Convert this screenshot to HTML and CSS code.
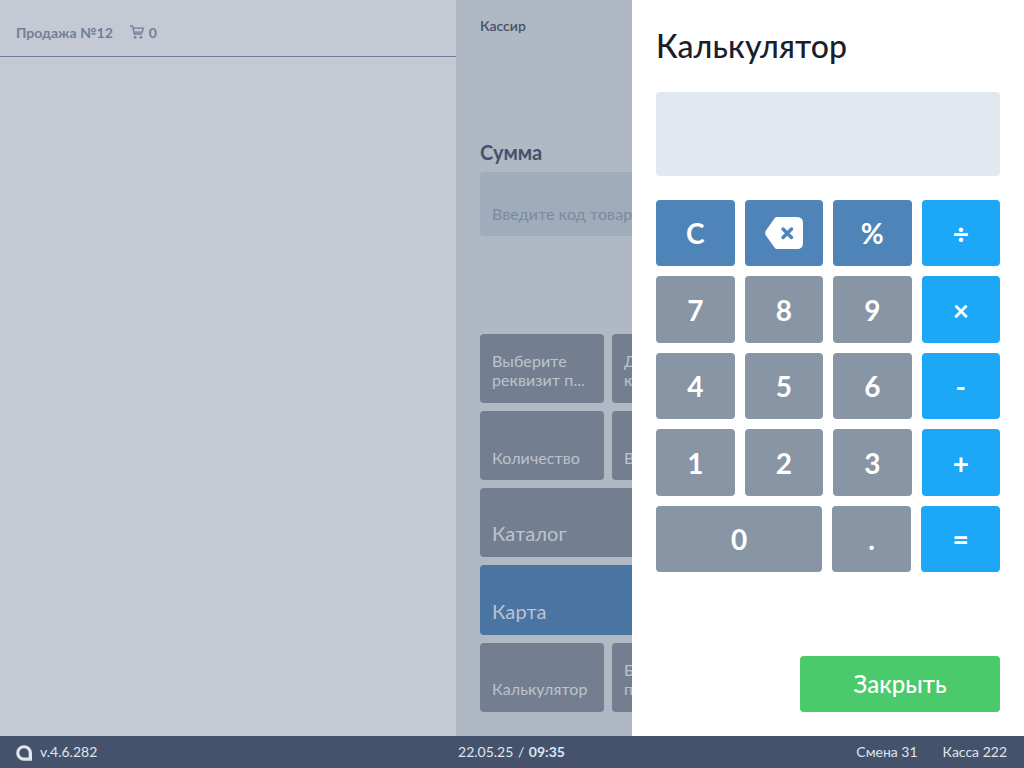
FILE: index.html
```html
<!DOCTYPE html>
<html lang="ru">
<head>
<meta charset="utf-8">
<title>Калькулятор</title>
<link rel="stylesheet" href="styles.css">
</head>
<body>
<div class="app">
  <main class="main">
    <section class="sale">
      <header class="sale-head">
        <span class="sale-title">Продажа №12</span>
        <span class="cart">
          <svg class="cart-icon" viewBox="0 0 14 14" width="14" height="14" aria-hidden="true">
            <path d="M0.5 1H2.6L4.4 9H11.6M3.2 3.2H13.4L12.2 7.2H4.1" fill="none" stroke="#717f96" stroke-width="1.3" stroke-linecap="round" stroke-linejoin="round"/>
            <circle cx="5.1" cy="12.2" r="1.3" fill="#717f96"/>
            <circle cx="10.9" cy="12.2" r="1.3" fill="#717f96"/>
          </svg>
          <span class="cart-count">0</span>
        </span>
      </header>
    </section>
    <section class="register">
      <div class="cashier">Кассир</div>
      <h2 class="sum-label">Сумма</h2>
      <div class="sum-input">Введите код товара</div>
      <div class="tiles">
        <div class="tile">Выберите<br>реквизит п...</div>
        <div class="tile">Добавить<br>клиента</div>
        <div class="tile"></div>
        <div class="tile"></div>
        <div class="tile">Количество</div>
        <div class="tile">Возврат</div>
        <div class="tile"></div>
        <div class="tile"></div>
        <div class="tile tile-wide tile-large">Каталог</div>
        <div class="tile tile-wide"></div>
        <div class="tile tile-wide tile-large tile-blue">Карта</div>
        <div class="tile tile-wide tile-blue"></div>
        <div class="tile">Калькулятор</div>
        <div class="tile">Без<br>продажи</div>
        <div class="tile"></div>
        <div class="tile"></div>
      </div>
    </section>
    <aside class="drawer">
      <h1 class="drawer-title">Калькулятор</h1>
      <div class="display"></div>
      <div class="keys">
        <button class="key key-fn">C</button>
        <button class="key key-fn" aria-label="Удалить">
          <svg viewBox="0 0 38 32" width="38" height="32" aria-hidden="true">
            <path d="M12 0H32Q38 0 38 6V26Q38 32 32 32H12Q10.6 32 9.6 30.8L0.6 18Q-0.2 16 0.6 14L9.6 1.2Q10.6 0 12 0Z" fill="#fff"/>
            <path d="M18 12L26.5 20.5M26.5 12L18 20.5" stroke="#4e84b8" stroke-width="3.4" stroke-linecap="round"/>
          </svg>
        </button>
        <button class="key key-fn">%</button>
        <button class="key key-op">÷</button>
        <button class="key">7</button>
        <button class="key">8</button>
        <button class="key">9</button>
        <button class="key key-op">×</button>
        <button class="key">4</button>
        <button class="key">5</button>
        <button class="key">6</button>
        <button class="key key-op">-</button>
        <button class="key">1</button>
        <button class="key">2</button>
        <button class="key">3</button>
        <button class="key key-op">+</button>
      </div>
      <div class="keys-last">
        <button class="key">0</button>
        <button class="key">.</button>
        <button class="key key-op">=</button>
      </div>
      <div class="drawer-foot">
        <button class="close">Закрыть</button>
      </div>
    </aside>
  </main>
  <footer class="footer">
    <div class="version">
      <svg viewBox="0 0 16 16" width="16" height="16" aria-hidden="true">
        <path d="M8 0.2A7.8 7.8 0 0 0 8 15.8H16V8A8 7.8 0 0 0 8 0.2ZM8 3.2A4.7 4.7 0 0 1 12.7 8V12.6H8A4.7 4.7 0 0 1 8 3.2Z" fill="#dfe6ee" fill-rule="evenodd"/>
      </svg>
      <span>v.4.6.282</span>
    </div>
    <div class="clock">22.05.25 / <b>09:35</b></div>
    <div class="shift"><span>Смена 31</span><span>Касса 222</span></div>
  </footer>
</div>
</body>
</html>
```

FILE: styles.css
```css
* { box-sizing: border-box; }
html, body { margin: 0; height: 100%; }
body { font-family: Lato, "Noto Sans", sans-serif; overflow: hidden; }

.app { width: 1024px; height: 768px; display: flex; flex-direction: column; }
.main { position: relative; flex: 1; display: flex; overflow: hidden; }

.sale { width: 456px; background: #c5c9d3; }
.sale-head {
  height: 57px;
  padding: 8px 16px 0;
  display: flex;
  align-items: center;
  gap: 17px;
  border-bottom: 1px solid #717f9b;
  color: #717f96;
  font-size: 14px;
  font-weight: 700;
}
.cart { display: flex; align-items: center; gap: 5px; }
.cart-icon { display: block; }

.register { flex: 1; background: #b0b8c4; padding: 0 24px; color: #45526c; }
.cashier { padding-top: 17px; font-size: 14px; font-weight: 600; line-height: 17px; }
.sum-label { margin: 102px 0 3px; font-size: 20px; font-weight: 700; line-height: 33px; height: 33px; }
.sum-input {
  height: 64px;
  background: #9eacbc;
  border-radius: 4px;
  padding: 32px 12px 0;
  font-size: 16px;
  line-height: 19px;
  letter-spacing: 0.12px;
  color: #7d8aa0;
}
.tiles {
  margin-top: 97.5px;
  display: grid;
  grid-template-columns: repeat(4, 124px);
  grid-auto-rows: 69.3px;
  gap: 8px;
}
.tile {
  background: #737f90;
  border-radius: 4px;
  padding: 12px 12px 13.3px;
  color: #bcc3ce;
  font-size: 16px;
  line-height: 19.2px;
  letter-spacing: 0.1px;
  display: flex;
  align-items: flex-end;
}
.tile-wide { grid-column: span 2; }
.tile-large { padding-bottom: 12px; font-size: 20px; line-height: 24px; }
.tile-blue { background: #4a74a2; }

.drawer {
  position: absolute;
  top: 0;
  right: 0;
  bottom: 0;
  width: 392px;
  background: #fff;
  padding: 24px;
  display: flex;
  flex-direction: column;
}
.drawer-title { margin: -1px 0 0; font-size: 32px; font-weight: 500; letter-spacing: 0.1px; line-height: 46px; color: #1a1f2b; }
.display { margin-top: 23px; height: 84px; background: #e1e8f0; border-radius: 4px; }
.keys {
  margin-top: 24px;
  display: grid;
  grid-template-columns: repeat(4, 1fr);
  grid-auto-rows: 66.4px;
  gap: 10px;
}
.keys-last {
  margin-top: 10px;
  display: grid;
  grid-template-columns: 166px 1fr 1fr;
  grid-auto-rows: 66.4px;
  gap: 10px;
}
.key {
  border: 0;
  padding: 0.4px 0 0;
  border-radius: 4px;
  background: #8795a4;
  color: #fff;
  font: 700 28px/1 Lato, "Noto Sans", sans-serif;
  display: flex;
  align-items: center;
  justify-content: center;
}
.key-fn { background: #4e84b8; }
.key-op { background: #1ca7f7; }
.drawer-foot { margin-top: auto; display: flex; justify-content: flex-end; }
.close {
  width: 200px;
  height: 56px;
  border: 0;
  border-radius: 4px;
  background: #4bca6b;
  color: #fff;
  font: 500 24px/1 Lato, "Noto Sans", sans-serif;
}

.footer {
  height: 32px;
  background: #45526c;
  color: #dfe6ee;
  font-size: 14px;
  display: grid;
  grid-template-columns: 1fr auto 1fr;
  align-items: center;
  padding: 0 17px 2px 16px;
}
.version { display: flex; align-items: center; gap: 8px; }
.version svg { display: block; margin-top: 3px; }
.clock { word-spacing: 1px; }
.clock b { font-weight: 700; }
.shift { display: flex; justify-content: flex-end; gap: 25px; }
```
